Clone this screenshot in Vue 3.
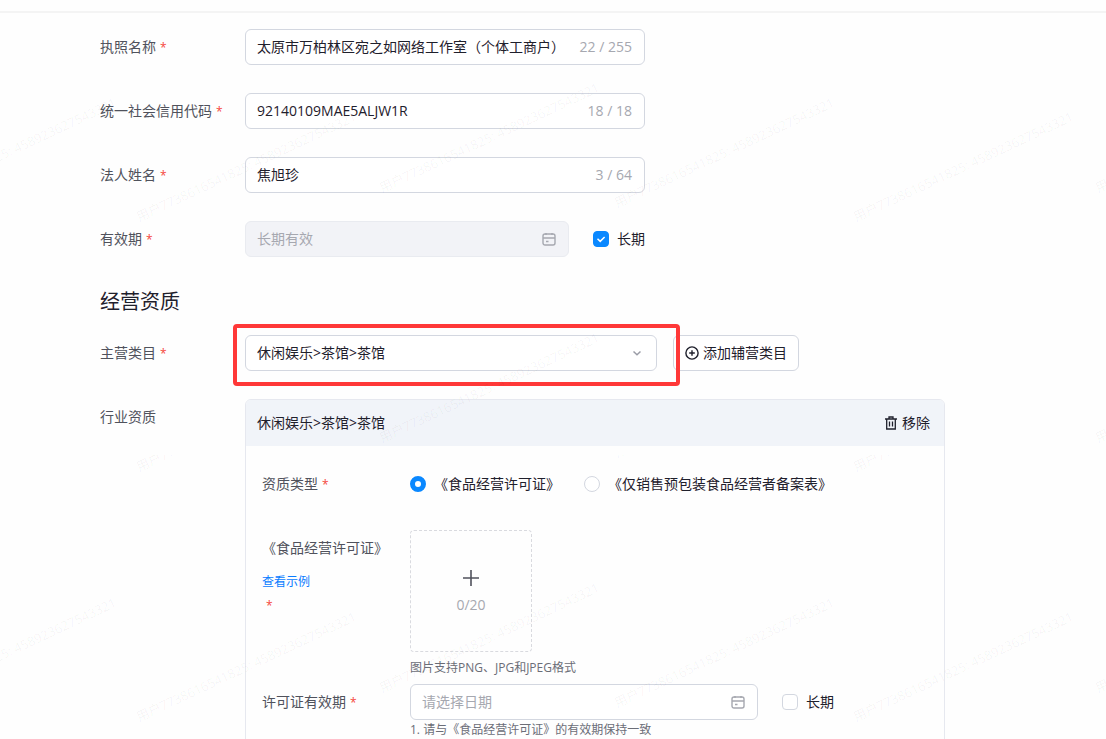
<script setup>
import { ref } from 'vue'

const fields = ref([
  { id: 'license', label: '执照名称', value: '太原市万柏林区宛之如网络工作室（个体工商户）', count: '22 / 255' },
  { id: 'code', label: '统一社会信用代码', value: '92140109MAE5ALJW1R', count: '18 / 18' },
  { id: 'person', label: '法人姓名', value: '焦旭珍', count: '3 / 64' },
])
const category = '休闲娱乐>茶馆>茶馆'
const longTerm = ref(true)
const permitLongTerm = ref(false)
const permitType = ref('food')

const markText = '用户7738616541825: 458923627543321'
const marks = [
  [-101, 208], [139, 222], [382, 193], [617, 208], [856, 222], [1098, 193],
  [382, 443], [1098, 443],
  [-101, 708], [139, 722], [382, 693], [617, 708], [856, 722], [1098, 693],
]
const cutMarks = [[139, 472], [617, 458], [856, 472]]
</script>

<template>
  <main class="page">
    <div class="topbar"></div>
    <form class="form" @submit.prevent>
      <div v-for="f in fields" :key="f.id" class="row">
        <label class="label" :for="f.id">{{ f.label }}<span class="req">*</span></label>
        <div class="box wide">
          <input :id="f.id" v-model="f.value" class="text" type="text" />
          <span class="count">{{ f.count }}</span>
        </div>
      </div>

      <div class="row">
        <label class="label" for="valid">有效期<span class="req">*</span></label>
        <div class="pair wide">
          <div class="box disabled">
            <input id="valid" class="text" type="text" placeholder="长期有效" disabled />
            <svg class="cal" viewBox="0 0 14 14"><rect x="1" y="2" width="12" height="11" rx="2" /><path d="M1 6h12M4 1v2M10 1v2M4 9.5h2.5" /></svg>
          </div>
          <label class="option">
            <span class="tick">
              <input v-model="longTerm" type="checkbox" />
              <svg v-if="longTerm" viewBox="0 0 16 16"><path d="M4.5 7.8 7.2 10.4 11.6 6" /></svg>
            </span>
            长期
          </label>
        </div>
      </div>

      <h2 class="title">经营资质</h2>

      <div class="row">
        <label class="label" for="category">主营类目<span class="req">*</span></label>
        <div class="category">
          <div class="box picker">
            <select id="category" class="text">
              <option>{{ category }}</option>
            </select>
            <svg class="arrow" viewBox="0 0 14 14"><path d="M3.5 5.5 7 8.7 10.5 5.5" /></svg>
            <span class="highlight"></span>
          </div>
          <button class="add" type="button">
            <svg viewBox="0 0 14 14"><circle cx="7" cy="7" r="6.1" /><path d="M7 4.2v5.6M4.2 7h5.6" /></svg>
            添加辅营类目
          </button>
        </div>
      </div>

      <div class="row">
        <span class="label">行业资质</span>
        <section class="card">
          <header class="card-head">
            <span>{{ category }}</span>
            <button class="remove" type="button">
              <svg viewBox="0 0 12 14"><path d="M0 3h12M4 3V1h4v2M1.7 3v10h8.6V3M4.5 5.5v5M7.5 5.5v5" /></svg>
              移除
            </button>
          </header>
          <div class="card-body">
            <div class="line spaced">
              <span class="sublabel">资质类型<span class="req">*</span></span>
              <div class="radios">
                <label class="option"><input v-model="permitType" type="radio" name="permit" value="food" />《食品经营许可证》</label>
                <label class="option"><input v-model="permitType" type="radio" name="permit" value="record" />《仅销售预包装食品经营者备案表》</label>
              </div>
            </div>
            <div class="line">
              <div class="sublabel">
                《食品经营许可证》
                <a class="sample" href="#">查看示例</a>
                <span class="req below">*</span>
              </div>
              <div>
                <button class="upload" type="button">
                  <svg viewBox="0 0 16 16"><path d="M8 0v16M0 8h16" /></svg>
                  <span>0/20</span>
                </button>
                <p class="hint tall">图片支持PNG、JPG和JPEG格式</p>
              </div>
            </div>
            <div class="line">
              <label class="sublabel" for="permit-date">许可证有效期<span class="req">*</span></label>
              <div>
                <div class="pair">
                  <div class="box date">
                    <input id="permit-date" class="text" type="text" placeholder="请选择日期" />
                    <svg class="cal" viewBox="0 0 14 14"><rect x="1" y="2" width="12" height="11" rx="2" /><path d="M1 6h12M4 1v2M10 1v2M4 9.5h2.5" /></svg>
                  </div>
                  <label class="option">
                    <span class="tick">
                      <input v-model="permitLongTerm" type="checkbox" />
                      <svg v-if="permitLongTerm" viewBox="0 0 16 16"><path d="M4.5 7.8 7.2 10.4 11.6 6" /></svg>
                    </span>
                    长期
                  </label>
                </div>
                <p class="hint">1. 请与《食品经营许可证》的有效期保持一致</p>
              </div>
            </div>
          </div>
        </section>
      </div>
    </form>

    <svg class="watermark" aria-hidden="true">
      <defs>
        <clipPath id="lower"><rect x="0" y="455" width="100%" height="40" /></clipPath>
      </defs>
      <text v-for="(m, i) in marks" :key="i" :transform="`translate(${m[0]} ${m[1]}) rotate(-25)`">{{ markText }}</text>
      <g clip-path="url(#lower)">
        <text v-for="(m, i) in cutMarks" :key="i" :transform="`translate(${m[0]} ${m[1]}) rotate(-25)`">{{ markText }}</text>
      </g>
    </svg>
  </main>
</template>

<style>
body {
  margin: 0;
  background: #fefefe;
}
</style>

<style scoped>
.page,
.page * {
  box-sizing: border-box;
}
.page {
  position: relative;
  height: 100vh;
  overflow: hidden;
  font: 14px/20px "Open Sans", "Noto Sans CJK SC", sans-serif;
  color: #1f202c;
}
input,
select,
button {
  font: inherit;
  color: inherit;
  margin: 0;
}
svg {
  fill: none;
  stroke: currentColor;
  flex: none;
}
.topbar {
  height: 13px;
  border-bottom: 2px solid #f4f4f4;
}
.form {
  padding: 16px 24px 0 100px;
}
.row {
  display: flex;
  margin-bottom: 28px;
}
.label {
  flex: none;
  width: 145px;
  line-height: 36px;
  color: #50525c;
}
.req {
  margin-left: 4px;
  font-size: 12px;
  line-height: 16px;
  color: #f5483b;
}
.box {
  position: relative;
  display: flex;
  align-items: center;
  height: 36px;
  padding: 0 12px 0 11px;
  border: 1px solid #d3d7e0;
  border-radius: 6px;
  background: #fff;
}
.wide {
  width: 400px;
}
.text {
  flex: 1;
  min-width: 0;
  height: 34px;
  padding: 0;
  border: 0;
  outline: 0;
  background: transparent;
  appearance: none;
}
input.text {
  padding-bottom: 2px;
}
.text::placeholder {
  color: #a6a8b0;
  opacity: 1;
}
.count {
  color: #a6a8b0;
}
.pair {
  display: flex;
  align-items: center;
  gap: 24px;
}
.disabled {
  flex: 1;
  background: #f2f3f7;
  border-color: #e9ebf0;
}
.cal {
  width: 14px;
  height: 14px;
  color: #a6a8b0;
  stroke-width: 1.4;
}
.option {
  display: flex;
  align-items: center;
  gap: 8px;
  white-space: nowrap;
}
.tick {
  position: relative;
  width: 16px;
  height: 16px;
}
.tick input {
  display: block;
  width: 16px;
  height: 16px;
  border: 1px solid #d3d7e0;
  border-radius: 4px;
  background: #fff;
  appearance: none;
}
.tick input:checked {
  border-color: #0a88ff;
  background: #0a88ff;
}
.tick svg {
  position: absolute;
  inset: 0;
  color: #fff;
  stroke-width: 1.5;
  pointer-events: none;
}
.title {
  margin: 31px 0 19px;
  font-size: 20px;
  line-height: 28px;
  font-weight: 400;
}
.category {
  display: flex;
  gap: 16px;
}
.picker {
  width: 412px;
}
.arrow {
  width: 14px;
  height: 14px;
  color: #9a9ca6;
  stroke-width: 1.5;
  pointer-events: none;
}
.highlight {
  position: absolute;
  z-index: 1;
  inset: -12px -24px -16px -13px;
  border: 4px solid #ff3838;
  border-radius: 4px;
  pointer-events: none;
}
.add {
  display: flex;
  align-items: center;
  gap: 4px;
  height: 36px;
  padding: 0 11px;
  border: 1px solid #d3d7e0;
  border-radius: 6px;
  background: #fff;
}
.add svg {
  width: 14px;
  height: 14px;
  stroke-width: 1.4;
}
.card {
  width: 700px;
  border: 1px solid #e6e8ef;
  border-radius: 6px;
  overflow: hidden;
}
.card-head {
  display: flex;
  align-items: center;
  justify-content: space-between;
  height: 46px;
  padding: 0 14px 0 11px;
  background: #f1f4f9;
}
.remove {
  display: flex;
  align-items: center;
  gap: 5px;
  padding: 0;
  border: 0;
  background: transparent;
}
.remove svg {
  width: 12px;
  height: 14px;
  stroke-width: 1.3;
}
.card-body {
  padding: 20px 16px;
}
.line {
  display: flex;
}
.spaced {
  margin-bottom: 28px;
}
.sublabel {
  flex: none;
  width: 148px;
  line-height: 36px;
  color: #50525c;
}
.radios {
  display: flex;
  gap: 24px;
}
.radios input {
  width: 16px;
  height: 16px;
  border: 1px solid #d3d7e0;
  border-radius: 50%;
  background: #fff;
  appearance: none;
}
.radios input:checked {
  border: 5px solid #0a88ff;
}
.sample {
  display: block;
  font-size: 12px;
  line-height: 32px;
  color: #0a7cff;
  text-decoration: none;
}
.below {
  display: block;
}
.upload {
  display: flex;
  flex-direction: column;
  align-items: center;
  justify-content: center;
  gap: 9px;
  width: 122px;
  height: 122px;
  padding: 2px 0 0;
  border: 1px dashed #d9dadf;
  border-radius: 4px;
  background: transparent;
  color: #a6a8b0;
}
.upload svg {
  width: 16px;
  height: 16px;
  color: #50525c;
  stroke-width: 1.6;
}
.hint {
  margin: 0;
  font-size: 12px;
  line-height: 20px;
  color: #6b6d77;
}
.tall {
  line-height: 32px;
}
.date {
  width: 348px;
}
.watermark {
  position: absolute;
  z-index: 2;
  inset: 0;
  width: 100%;
  height: 100%;
  pointer-events: none;
  stroke: none;
  fill: rgba(0, 0, 0, 0.045);
  font-size: 13px;
}
</style>
